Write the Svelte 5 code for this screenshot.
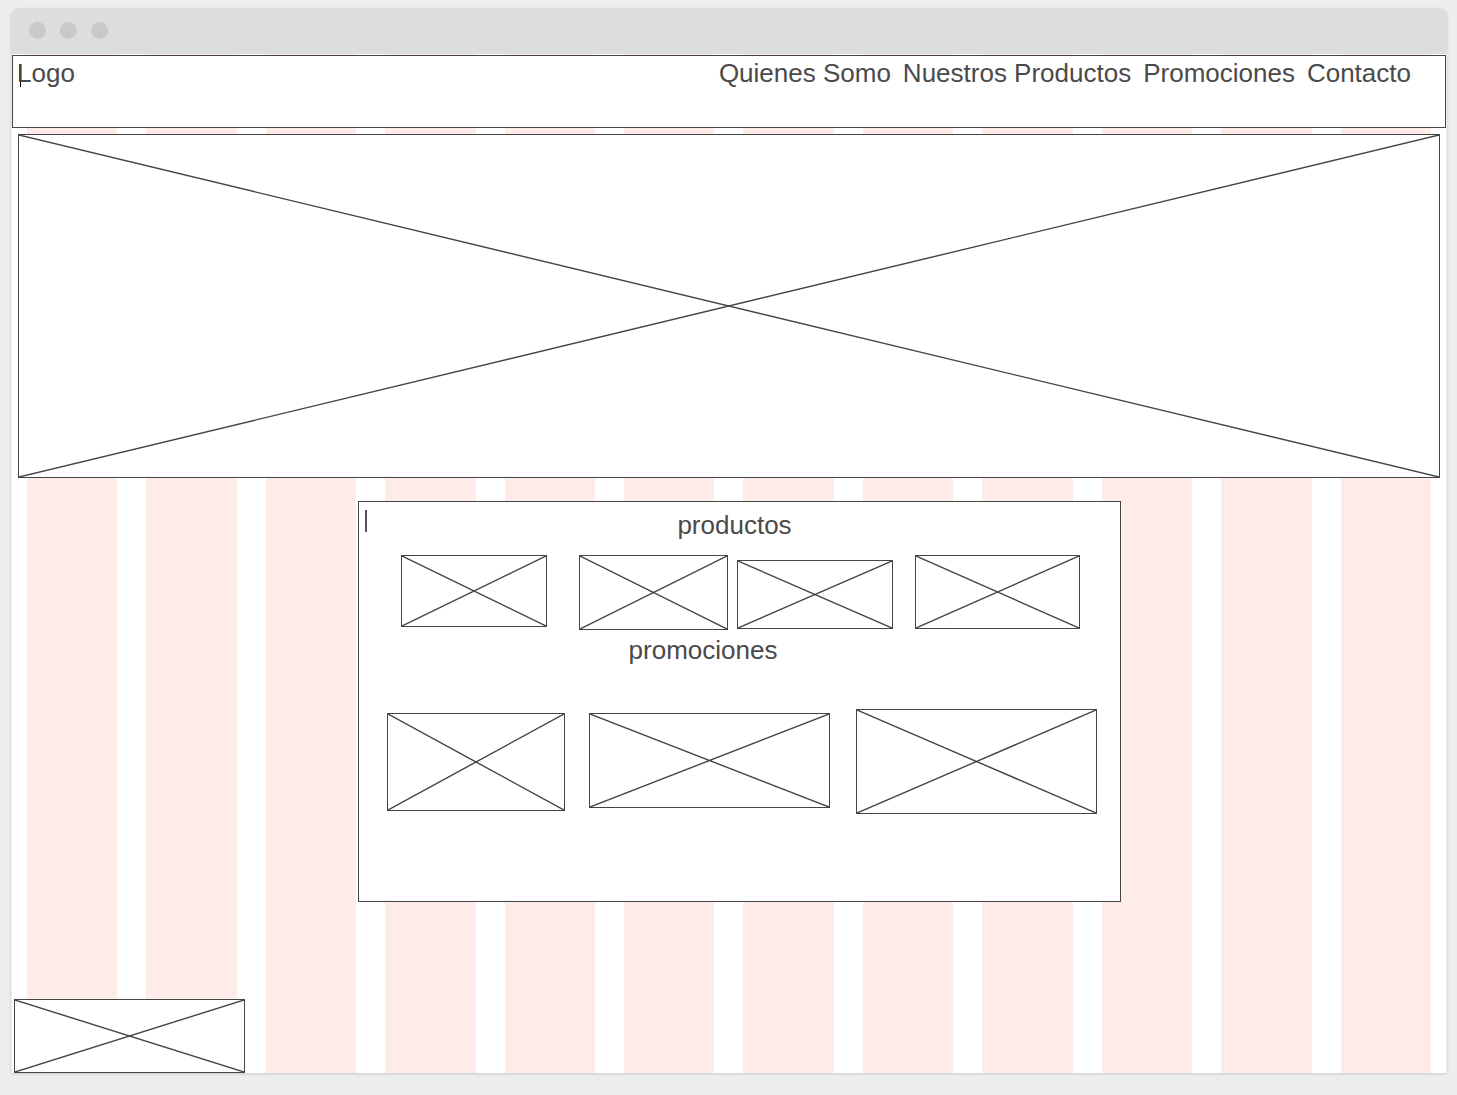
<script>
  const links = ['Quienes Somo', 'Nuestros Productos', 'Promociones', 'Contacto'];

  const products = [
    { width: 146, height: 72, top: 0 },
    { width: 149, height: 75, top: 0 },
    { width: 156, height: 69, top: 5 },
    { width: 165, height: 74, top: 0 }
  ];

  const promotions = [
    { width: 178, height: 98, top: 4 },
    { width: 241, height: 95, top: 4 },
    { width: 241, height: 105, top: 0 }
  ];
</script>

{#snippet cross()}
  <svg class="cross" viewBox="0 0 100 100" preserveAspectRatio="none" aria-hidden="true">
    <path d="M0 0L100 100M100 0L0 100" />
  </svg>
{/snippet}

<div class="page">
  <div class="window">
    <div class="titlebar">
      <span class="dot"></span>
      <span class="dot"></span>
      <span class="dot"></span>
    </div>

    <div class="viewport">
      <div class="columns" aria-hidden="true">
        {#each Array(12) as _}
          <span class="column"></span>
        {/each}
      </div>

      <div class="content">
        <header class="header">
          <div class="logo">Logo<span class="caret"></span></div>
          <nav class="nav">
            {#each links as link}
              <a href="#top">{link}</a>
            {/each}
          </nav>
        </header>

        <div class="box hero">{@render cross()}</div>

        <main class="main">
          <section class="panel">
            <span class="bar"></span>
            <h2 class="title products-title">productos</h2>
            <div class="row products">
              {#each products as p}
                <div class="box" style:aspect-ratio="{p.width} / {p.height}" style:margin-top="{p.top}px">
                  {@render cross()}
                </div>
              {/each}
            </div>
            <h2 class="title promotions-title">promociones</h2>
            <div class="row promotions">
              {#each promotions as p}
                <div class="box" style:aspect-ratio="{p.width} / {p.height}" style:margin-top="{p.top}px">
                  {@render cross()}
                </div>
              {/each}
            </div>
          </section>
        </main>

        <footer class="footer">
          <div class="box badge">{@render cross()}</div>
        </footer>
      </div>
    </div>
  </div>
</div>

<style>
  :global(body) {
    background: #ededed;
  }

  .page,
  .page * {
    box-sizing: border-box;
  }

  .page {
    display: flex;
    min-height: 100vh;
    padding: 8px 10px 22px 11px;
    color: #4a4a4a;
    font: 26px/30px 'Liberation Sans', Arial, sans-serif;
  }

  .window {
    display: flex;
    flex: 1;
    flex-direction: column;
    border-radius: 8px 8px 0 0;
    box-shadow: 0 1px 3px rgba(0, 0, 0, 0.15);
  }

  .titlebar {
    display: flex;
    gap: 14px;
    height: 46px;
    padding: 14px 18px;
    border-radius: 8px 8px 0 0;
    background: #ddd;
  }

  .dot {
    width: 17px;
    height: 17px;
    border-radius: 50%;
    background: #c9c9c9;
  }

  .viewport {
    display: grid;
    flex: 1;
    margin: 0 1px;
    background: #fff;
  }

  .columns,
  .content {
    grid-area: 1 / 1;
    min-width: 0;
  }

  .columns {
    display: grid;
    grid-template-columns: repeat(12, 1fr);
    gap: 29px;
    padding: 0 15px;
  }

  .column {
    background: #ffebe8;
  }

  .content {
    display: flex;
    flex-direction: column;
    z-index: 1;
    padding-top: 1px;
  }

  .header {
    display: flex;
    justify-content: space-between;
    min-height: 73px;
    padding: 2px 34px 2px 4px;
    border: 1px solid #444;
    background: #fff;
  }

  .logo {
    position: relative;
  }

  .caret {
    position: absolute;
    top: 6px;
    left: 3px;
    width: 1px;
    height: 23px;
    background: linear-gradient(#444 18px, #000 18px);
  }

  .caret::before {
    content: '';
    position: absolute;
    right: 0;
    width: 2px;
    height: 17px;
    background: #444;
  }

  .nav {
    display: flex;
    gap: 12px;
  }

  .nav a {
    color: inherit;
    text-decoration: none;
  }

  .box {
    position: relative;
    border: 1px solid #444;
    background: #fff;
  }

  .cross {
    position: absolute;
    inset: 0;
    width: 100%;
    height: 100%;
  }

  .cross path {
    fill: none;
    stroke: #444;
    stroke-width: 1.4;
    vector-effect: non-scaling-stroke;
  }

  .hero {
    margin: 6px;
    aspect-ratio: 1422 / 344;
  }

  .main {
    display: grid;
    grid-template-columns: 346fr 763fr 325fr;
    margin-top: 17px;
  }

  .panel {
    position: relative;
    grid-column: 2;
    padding: 8px 0 87px;
    border: 1px solid #444;
    background: #fff;
  }

  .bar {
    position: absolute;
    top: 8px;
    left: 6px;
    width: 2px;
    height: 22px;
    background: #555;
  }

  .title {
    margin: 0;
    font: inherit;
    text-align: center;
  }

  .products-title {
    padding-right: 10px;
  }

  .promotions-title {
    padding-right: 73px;
  }

  .row {
    display: grid;
    align-items: start;
  }

  .row .box:nth-child(1) {
    grid-column: 2;
  }

  .row .box:nth-child(2) {
    grid-column: 4;
  }

  .row .box:nth-child(3) {
    grid-column: 6;
  }

  .row .box:nth-child(4) {
    grid-column: 8;
  }

  .products {
    grid-template-columns: 42fr 146fr 32fr 149fr 9fr 156fr 22fr 165fr 40fr;
    padding: 15px 0 5px;
  }

  .promotions {
    grid-template-columns: 28fr 178fr 24fr 241fr 26fr 241fr 23fr;
    padding-top: 44px;
  }

  .badge {
    width: 231px;
    aspect-ratio: 231 / 74;
  }

  .footer {
    margin-top: auto;
    padding: 24px 2px 0;
  }
</style>
